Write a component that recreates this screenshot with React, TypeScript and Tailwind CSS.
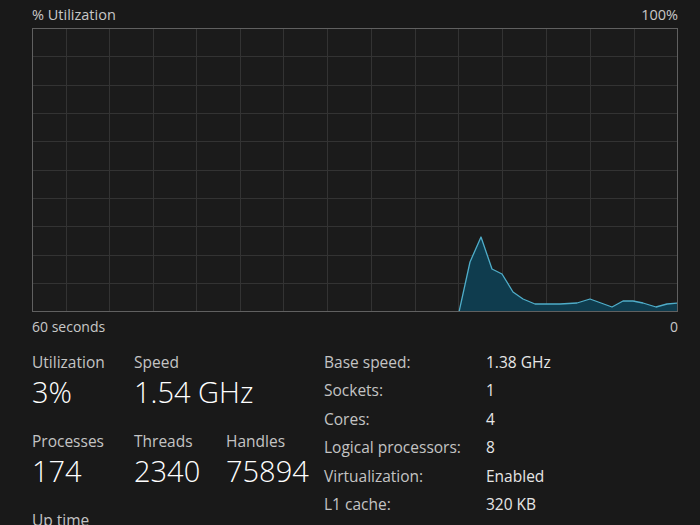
import React from "react";

const vLines = [33, 76, 120, 163, 207, 250, 294, 338, 382, 425, 469, 513, 557, 601];
const hLines = [27, 56, 84, 112, 141, 169, 197, 226, 254];

// points of the usage curve, in chart coordinates
const graph: [number, number][] = [
  [426, 283],
  [437, 233],
  [448, 208],
  [459, 240],
  [469, 245],
  [480, 263],
  [490, 270],
  [502, 275],
  [527, 275],
  [544, 274],
  [557, 270],
  [579, 278],
  [590, 272],
  [600, 272],
  [610, 274],
  [623, 278],
  [634, 275],
  [645, 274],
];

const specs = [
  ["Base speed:", "1.38 GHz"],
  ["Sockets:", "1"],
  ["Cores:", "4"],
  ["Logical processors:", "8"],
  ["Virtualization:", "Enabled"],
  ["L1 cache:", "320 KB"],
];

const Stat = ({ label, value, w }: { label: string; value?: string; w: string }) => (
  <div className={`flex flex-col ${w}`}>
    <span className="text-[15.5px] leading-[20px] text-[#c4c4c4]">{label}</span>
    {value && (
      <span className="text-[29px] leading-[40px] text-white font-light">{value}</span>
    )}
  </div>
);

export default function App() {
  const line = graph.map(([x, y]) => `${x},${y}`).join(" ");
  const area = `${line} 645,283 426,283`;

  return (
    <div
      className="w-[700px] h-[525px] overflow-hidden bg-[#191919] pl-[32px] pt-[5px] text-[#c8c8c8]"
      style={{ fontFamily: '"Open Sans", "Noto Sans", sans-serif' }}
    >
      <div className="w-[646px] flex justify-between text-[14.5px] leading-[20px]">
        <span>% Utilization</span>
        <span>100%</span>
      </div>
      <div className="mt-[3px] w-[646px] h-[284px] border border-[#606060] bg-[#1b1b1b]">
        <svg width="644" height="282" viewBox="0 0 644 282" className="block">
          {vLines.map((x) => (
            <line key={`v${x}`} x1={x + 0.5} y1={0} x2={x + 0.5} y2={282} stroke="#333333" strokeWidth="1" />
          ))}
          {hLines.map((y) => (
            <line key={`h${y}`} x1={0} y1={y + 0.5} x2={644} y2={y + 0.5} stroke="#333333" strokeWidth="1" />
          ))}
          <polygon points={area} fill="#0f3c4e" />
          <polyline points={line} fill="none" stroke="#4fadc9" strokeWidth="1.3" strokeLinejoin="round" />
        </svg>
      </div>
      <div className="w-[646px] flex justify-between text-[14px] leading-[18px] mt-[6px]">
        <span>60 seconds</span>
        <span>0</span>
      </div>
      <div className="flex mt-[16px]">
        <div className="w-[292px] flex flex-col gap-[19px]">
          <div className="flex">
            <Stat label="Utilization" value="3%" w="w-[102px]" />
            <Stat label="Speed" value="1.54 GHz" w="w-[160px]" />
          </div>
          <div className="flex">
            <Stat label="Processes" value="174" w="w-[102px]" />
            <Stat label="Threads" value="2340" w="w-[92px]" />
            <Stat label="Handles" value="75894" w="w-[90px]" />
          </div>
          <div className="flex">
            <Stat label="Up time" w="w-[102px]" />
          </div>
        </div>
        <div className="flex flex-col text-[15.5px] leading-[28.4px] -mt-[4px]">
          {specs.map(([k, v]) => (
            <div key={k} className="flex">
              <span className="w-[162px] text-[#c4c4c4]">{k}</span>
              <span className="text-[#e6e6e6]">{v}</span>
            </div>
          ))}
        </div>
      </div>
    </div>
  );
}
